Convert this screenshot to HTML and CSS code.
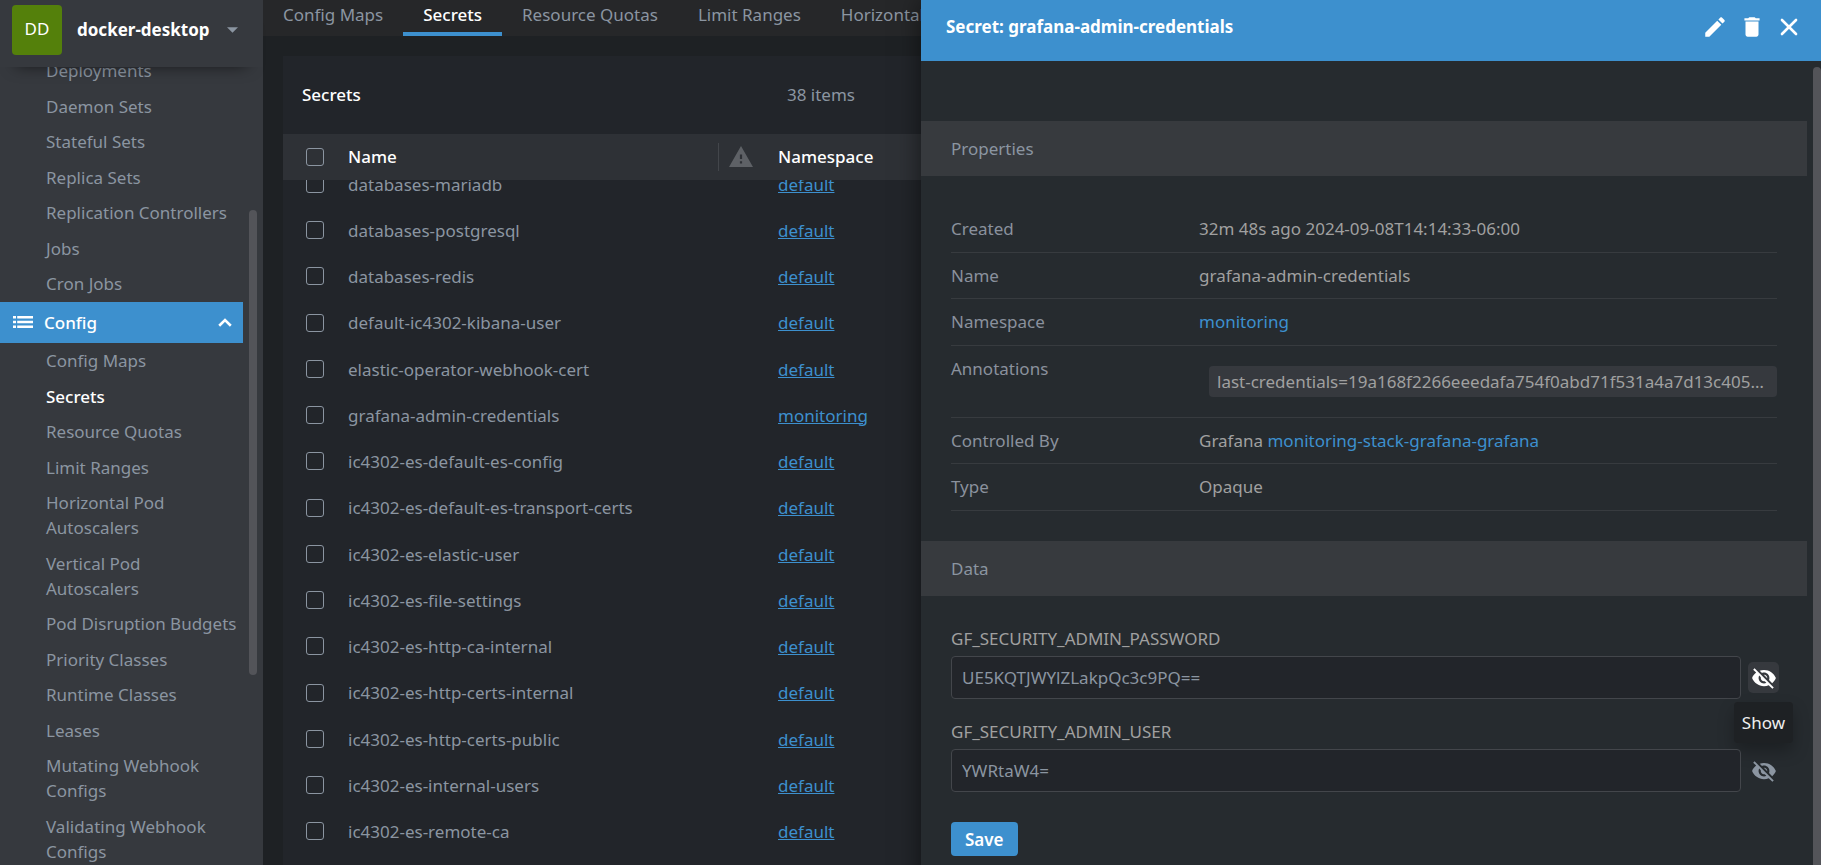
FILE: index.html
```html
<!DOCTYPE html>
<html lang="en">
<head>
<meta charset="utf-8">
<title>Secrets</title>
<link rel="stylesheet" href="styles.css">
</head>
<body>
<div class="app">
  <aside class="sidebar">
    <button class="cluster" type="button">
      <span class="avatar">DD</span>
      <span class="cluster-name">docker-desktop</span>
      <svg class="caret" viewBox="0 0 10 5" aria-hidden="true"><path d="M0 0h10L5 5z"/></svg>
    </button>
    <div class="nav-wrap">
      <nav class="nav">
        <ul class="nav-list nav-list-top">
          <li><a href="#">Deployments</a></li>
          <li><a href="#">Daemon Sets</a></li>
          <li><a href="#">Stateful Sets</a></li>
          <li><a href="#">Replica Sets</a></li>
          <li><a href="#">Replication Controllers</a></li>
          <li><a href="#">Jobs</a></li>
          <li><a href="#">Cron Jobs</a></li>
        </ul>
        <button class="nav-group" type="button">
          <svg class="icon-list" viewBox="0 0 20 12" aria-hidden="true"><path d="M0 0h3v2.600H0zM4.200 0H20v2.600H4.200zM0 4.700h3v2.600H0zM4.200 4.700H20v2.600H4.200zM0 9.400h3V12H0zM4.200 9.400H20V12H4.200z"/></svg>
          <span>Config</span>
          <svg class="icon-chevron" viewBox="0 0 14 9" aria-hidden="true"><path d="M1.200 7.700 7 2l5.800 5.700"/></svg>
        </button>
        <ul class="nav-list">
          <li><a href="#">Config Maps</a></li>
          <li><a class="active" href="#">Secrets</a></li>
          <li><a href="#">Resource Quotas</a></li>
          <li><a href="#">Limit Ranges</a></li>
          <li><a href="#">Horizontal Pod<br>Autoscalers</a></li>
          <li><a href="#">Vertical Pod<br>Autoscalers</a></li>
          <li><a href="#">Pod Disruption Budgets</a></li>
          <li><a href="#">Priority Classes</a></li>
          <li><a href="#">Runtime Classes</a></li>
          <li><a href="#">Leases</a></li>
          <li><a href="#">Mutating Webhook<br>Configs</a></li>
          <li><a href="#">Validating Webhook<br>Configs</a></li>
        </ul>
      </nav>
      <div class="track"><div class="thumb"></div></div>
    </div>
  </aside>

  <main class="main">
    <nav class="tabs">
      <a href="#">Config Maps</a>
      <a class="active" href="#">Secrets</a>
      <a href="#">Resource Quotas</a>
      <a href="#">Limit Ranges</a>
      <a href="#">Horizontal Pod Autoscalers</a>
    </nav>
    <section class="panel">
      <header class="panel-head">
        <h1>Secrets</h1>
        <span class="count">38 items</span>
      </header>
      <div class="table-wrap">
        <table class="table table-head">
          <colgroup><col class="c-check"><col class="c-name"><col class="c-warn"><col></colgroup>
          <thead>
            <tr>
              <th><input type="checkbox" aria-label="Select all"></th>
              <th>Name</th>
              <th class="warn"><svg viewBox="0 0 24 21" aria-label="Warnings"><path fill-rule="evenodd" d="M12 0 24 21H0zM10.900 8.500v4.500h2.200V8.500zM10.900 15.200v2.300h2.200v-2.300z"/></svg></th>
              <th>Namespace</th>
            </tr>
          </thead>
        </table>
        <div class="rows">
          <table class="table table-body">
            <colgroup><col class="c-check"><col class="c-name"><col class="c-warn"><col></colgroup>
            <tbody>
              <tr><td><input type="checkbox" aria-label="databases-mariadb"></td><td>databases-mariadb</td><td></td><td><a href="#">default</a></td></tr>
              <tr><td><input type="checkbox" aria-label="databases-postgresql"></td><td>databases-postgresql</td><td></td><td><a href="#">default</a></td></tr>
              <tr><td><input type="checkbox" aria-label="databases-redis"></td><td>databases-redis</td><td></td><td><a href="#">default</a></td></tr>
              <tr><td><input type="checkbox" aria-label="default-ic4302-kibana-user"></td><td>default-ic4302-kibana-user</td><td></td><td><a href="#">default</a></td></tr>
              <tr><td><input type="checkbox" aria-label="elastic-operator-webhook-cert"></td><td>elastic-operator-webhook-cert</td><td></td><td><a href="#">default</a></td></tr>
              <tr><td><input type="checkbox" aria-label="grafana-admin-credentials"></td><td>grafana-admin-credentials</td><td></td><td><a href="#">monitoring</a></td></tr>
              <tr><td><input type="checkbox" aria-label="ic4302-es-default-es-config"></td><td>ic4302-es-default-es-config</td><td></td><td><a href="#">default</a></td></tr>
              <tr><td><input type="checkbox" aria-label="ic4302-es-default-es-transport-certs"></td><td>ic4302-es-default-es-transport-certs</td><td></td><td><a href="#">default</a></td></tr>
              <tr><td><input type="checkbox" aria-label="ic4302-es-elastic-user"></td><td>ic4302-es-elastic-user</td><td></td><td><a href="#">default</a></td></tr>
              <tr><td><input type="checkbox" aria-label="ic4302-es-file-settings"></td><td>ic4302-es-file-settings</td><td></td><td><a href="#">default</a></td></tr>
              <tr><td><input type="checkbox" aria-label="ic4302-es-http-ca-internal"></td><td>ic4302-es-http-ca-internal</td><td></td><td><a href="#">default</a></td></tr>
              <tr><td><input type="checkbox" aria-label="ic4302-es-http-certs-internal"></td><td>ic4302-es-http-certs-internal</td><td></td><td><a href="#">default</a></td></tr>
              <tr><td><input type="checkbox" aria-label="ic4302-es-http-certs-public"></td><td>ic4302-es-http-certs-public</td><td></td><td><a href="#">default</a></td></tr>
              <tr><td><input type="checkbox" aria-label="ic4302-es-internal-users"></td><td>ic4302-es-internal-users</td><td></td><td><a href="#">default</a></td></tr>
              <tr><td><input type="checkbox" aria-label="ic4302-es-remote-ca"></td><td>ic4302-es-remote-ca</td><td></td><td><a href="#">default</a></td></tr>
            </tbody>
          </table>
        </div>
      </div>
    </section>
  </main>

  <section class="drawer">
    <header class="drawer-head">
      <h2>Secret: grafana-admin-credentials</h2>
      <button type="button" aria-label="Edit"><svg viewBox="0 0 24 24"><path d="M3 17.250V21h3.750L17.810 9.940l-3.750-3.750L3 17.250zM20.710 7.040c.39-.39.39-1.020 0-1.410l-2.340-2.340c-.39-.39-1.020-.39-1.410 0l-1.830 1.830 3.750 3.750 1.830-1.830z"/></svg></button>
      <button type="button" aria-label="Delete"><svg viewBox="0 0 24 24"><path d="M6 19c0 1.100.9 2 2 2h8c1.100 0 2-.9 2-2V7H6v12zM19 4h-3.500l-1-1h-5l-1 1H5v2h14V4z"/></svg></button>
      <button type="button" aria-label="Close"><svg class="icon-close" viewBox="0 0 24 24"><path d="M5.500 5.500l13 13M18.500 5.500l-13 13"/></svg></button>
    </header>
    <div class="drawer-body">
      <div class="drawer-content">
        <h3 class="band">Properties</h3>
        <dl class="props">
          <div><dt>Created</dt><dd>32m 48s ago 2024-09-08T14:14:33-06:00</dd></div>
          <div><dt>Name</dt><dd>grafana-admin-credentials</dd></div>
          <div><dt>Namespace</dt><dd><a href="#">monitoring</a></dd></div>
          <div class="labels"><dt>Annotations</dt><dd><span class="badge">last-credentials=19a168f2266eeedafa754f0abd71f531a4a7d13c405b2e8f6a90</span></dd></div>
          <div><dt>Controlled By</dt><dd>Grafana <a href="#">monitoring-stack-grafana-grafana</a></dd></div>
          <div><dt>Type</dt><dd>Opaque</dd></div>
        </dl>
        <h3 class="band">Data</h3>
        <form class="data">
          <label for="pw">GF_SECURITY_ADMIN_PASSWORD</label>
          <div class="field">
            <input id="pw" type="text" value="UE5KQTJWYlZLakpQc3c9PQ==">
            <button class="eye hover" type="button" aria-label="Show password">
              <svg viewBox="0 0 24 24"><use href="#eye-off"/></svg>
            </button>
            <span class="tooltip" role="tooltip">Show</span>
          </div>
          <label for="user">GF_SECURITY_ADMIN_USER</label>
          <div class="field">
            <input id="user" type="text" value="YWRtaW4=">
            <button class="eye" type="button" aria-label="Show user">
              <svg viewBox="0 0 24 24"><use href="#eye-off"/></svg>
            </button>
          </div>
          <button class="save" type="button">Save</button>
        </form>
      </div>
      <div class="track"><div class="thumb"></div></div>
    </div>
  </section>
</div>
<svg width="0" height="0" class="defs" aria-hidden="true"><defs><path id="eye-off" d="M12 7c2.760 0 5 2.240 5 5 0 .65-.13 1.260-.36 1.830l2.920 2.920c1.510-1.260 2.700-2.890 3.430-4.750-1.730-4.390-6-7.500-11-7.500-1.400 0-2.740.25-3.980.7l2.160 2.160C10.740 7.130 11.350 7 12 7zM2 4.270l2.280 2.280.46.46C3.080 8.300 1.780 10.020 1 12c1.730 4.390 6 7.500 11 7.500 1.550 0 3.030-.3 4.380-.84l.42.42L19.730 22 21 20.730 3.270 3 2 4.270zM7.530 9.800l1.550 1.550c-.05.21-.08.43-.08.65 0 1.660 1.340 3 3 3 .22 0 .44-.03.65-.08l1.550 1.550c-.67.33-1.410.53-2.200.53-2.760 0-5-2.240-5-5 0-.79.2-1.530.53-2.200zm4.310-.78l3.150 3.150.02-.16c0-1.660-1.340-3-3-3l-.17.01z"/></defs></svg>
</body>
</html>
```
FILE: styles.css
```css
* { box-sizing: border-box; }

body {
  margin: 0;
  background: #1e2124;
  color: #8b95a1;
  font: 17px/25px "Noto Sans", "Open Sans", sans-serif;
  overflow: hidden;
}

h1, h2, h3, ul, dl, dd { margin: 0; padding: 0; font-size: inherit; }
ul { list-style: none; }
button, input { font: inherit; color: inherit; }
button { border: 0; padding: 0; background: none; cursor: pointer; }
a { color: inherit; text-decoration: none; }
svg { display: block; fill: currentColor; }
.defs { position: absolute; }

.app {
  display: grid;
  grid-template-columns: 263px minmax(0, 1fr) 900px;
  height: 100vh;
}

/* Sidebar */
.sidebar {
  display: flex;
  flex-direction: column;
  min-height: 0;
  background: #36393e;
}
.cluster {
  display: flex;
  align-items: center;
  height: 67px;
  flex: none;
  padding: 0 25px 8px 12px;
  color: #fff;
  position: relative;
  background: #36393e;
  box-shadow: 0 14px 16px -16px #000a;
}
.avatar {
  width: 50px;
  height: 50px;
  border-radius: 4px;
  background: #54800b;
  line-height: 48px;
}
.cluster-name { margin-left: 15px; font-weight: 700; }
.caret { width: 11px; height: 6px; margin-left: 17px; color: #8b95a1; }

.nav-wrap { display: flex; flex: 1; min-height: 0; overflow: hidden; }
.nav { flex: 1; min-width: 0; }
.nav-list a { display: block; padding: 5px 0 5px 46px; }
.nav-list li:nth-child(odd) a { padding-bottom: 6px; }
.nav-list a.active { color: #fff; font-weight: 500; }
.nav-list-top { margin-top: -14px; }
.nav-group {
  display: flex;
  align-items: center;
  width: 100%;
  height: 41px;
  padding: 0 11px 1px 13px;
  background: #3d90ce;
  color: #fff;
  font-weight: 500;
}
.nav-group span { flex: 1; margin-left: 11px; text-align: left; }
.icon-list { width: 20px; height: 12px; }
.icon-chevron { width: 14px; height: 9px; fill: none; stroke: #fff; stroke-width: 2.6; }

.track { flex: none; padding: 0 0 0 6px; }
.thumb { width: 8px; border-radius: 4px; background: #535459; }
.sidebar .track { padding: 143px 6px 0; }
.sidebar .thumb { height: 465px; }

/* List view */
.main { min-width: 0; display: flex; flex-direction: column; overflow: hidden; }
.tabs { display: flex; flex: none; height: 36px; background: #262729; white-space: nowrap; }
.tabs a { padding: 2px 20px 0; }
.tabs .active { color: #fff; font-weight: 500; border-bottom: 4px solid #3d90ce; }
.panel {
  flex: 1;
  min-height: 0;
  display: flex;
  flex-direction: column;
  margin: 20px 0 0 20px;
  background: #22252a;
}
.panel-head {
  display: flex;
  align-items: center;
  justify-content: space-between;
  flex: none;
  height: 78px;
  padding: 0 66px 2px 19px;
}
.panel-head h1 { color: #fff; font-weight: 500; }
.table-wrap { flex: 1; min-height: 0; display: flex; flex-direction: column; }
.table { width: 100%; table-layout: fixed; border-collapse: collapse; flex: none; }
.c-check { width: 65px; }
.c-name { width: 370px; }
.c-warn { width: 60px; }
.table th, .table td { padding: 0; text-align: left; vertical-align: middle; }
.table th { height: 46px; background: #2e3136; color: #fff; font-weight: 500; }
.table th:first-child, .table td:first-child { padding-left: 23px; }
.table td { height: 46px; }
.table tr:nth-child(4n) td { height: 47px; }
.table th:nth-child(even) { padding-bottom: 2px; }
.table td a { color: #3d90ce; text-decoration: underline; }
.table input {
  appearance: none;
  display: block;
  width: 18px;
  height: 18px;
  margin: 0;
  border: 1px solid #8b95a1;
  border-radius: 3px;
}
.warn svg {
  box-sizing: content-box;
  width: 24px;
  height: 21px;
  padding: 3px 0 4px 10px;
  border-left: 1px solid #43464b;
  color: #5e6166;
}
.rows { flex: 1; min-height: 0; overflow: hidden; }
.table-body { margin-top: -19px; }

/* Details drawer */
.drawer {
  display: flex;
  flex-direction: column;
  min-width: 0;
  position: relative;
  background: #262b2f;
  box-shadow: 0 0 24px #0008;
}
.drawer-head {
  display: flex;
  align-items: center;
  flex: none;
  height: 61px;
  padding: 0 19px 8px 25px;
  gap: 11px;
  background: #3d90ce;
  color: #fff;
}
.drawer-head h2 { flex: 1; font-weight: 700; }
.drawer-head svg { width: 26px; height: 26px; }
.drawer-head .icon-close { fill: none; stroke: #fff; stroke-width: 2.4; stroke-linecap: round; }
.drawer-body { display: flex; flex: 1; min-height: 0; overflow: hidden; }
.drawer-content { flex: 1; min-width: 0; padding-top: 60px; }
.drawer .track { padding-top: 6px; padding-bottom: 16px; }
.drawer .thumb { height: 100%; }
.band {
  padding: 15px 30px;
  background: #373a3e;
  font-weight: 400;
}
.props { padding: 30px; }
.props > div {
  display: grid;
  grid-template-columns: 248px minmax(0, 1fr);
  padding: 10px 0;
  border-bottom: 1px solid #373b3f;
}
.props > div:nth-child(odd) { padding-bottom: 11px; }
.props > div:nth-child(5) { padding-bottom: 10px; }
.props > div:nth-child(6) { padding-bottom: 11px; }
.props > .labels { padding-bottom: 20px; }
.props a { color: #3d90ce; }
.props dt { color: #8a919d; }
.props dd { color: #a0a0a0; }
.badge {
  display: block;
  margin: 10px 0 0 10px;
  padding: 3px 8px;
  border-radius: 4px;
  background: #36393e;
  overflow: hidden;
  text-overflow: ellipsis;
  white-space: nowrap;
}
.data { padding: 30px; }
.data label { display: block; margin-bottom: 5px; color: #a0a0a0; }
.field { display: flex; align-items: center; position: relative; margin-bottom: 20px; }
.field input {
  flex: 1;
  min-width: 0;
  height: 43px;
  padding: 0 10px;
  border: 1px solid #43464b;
  border-radius: 4px;
  background: #22252a;
}
.eye { width: 31px; height: 31px; margin: 0 -2px 0 7px; border-radius: 5px; color: #8b95a1; }
.eye svg { width: 26px; height: 26px; margin: auto; }
.eye.hover { background: #36393e; color: #fff; }
.tooltip {
  position: absolute;
  right: -16px;
  top: 46px;
  padding: 8px;
  border-radius: 4px;
  background: #1e2124;
  color: #eee;
  box-shadow: 0 8px 16px #0004;
}
.save {
  margin-top: 10px;
  padding: 5px 14px;
  height: 34px;
  border-radius: 4px;
  background: #3d90ce;
  color: #fff;
  font-weight: 600;
}
```
